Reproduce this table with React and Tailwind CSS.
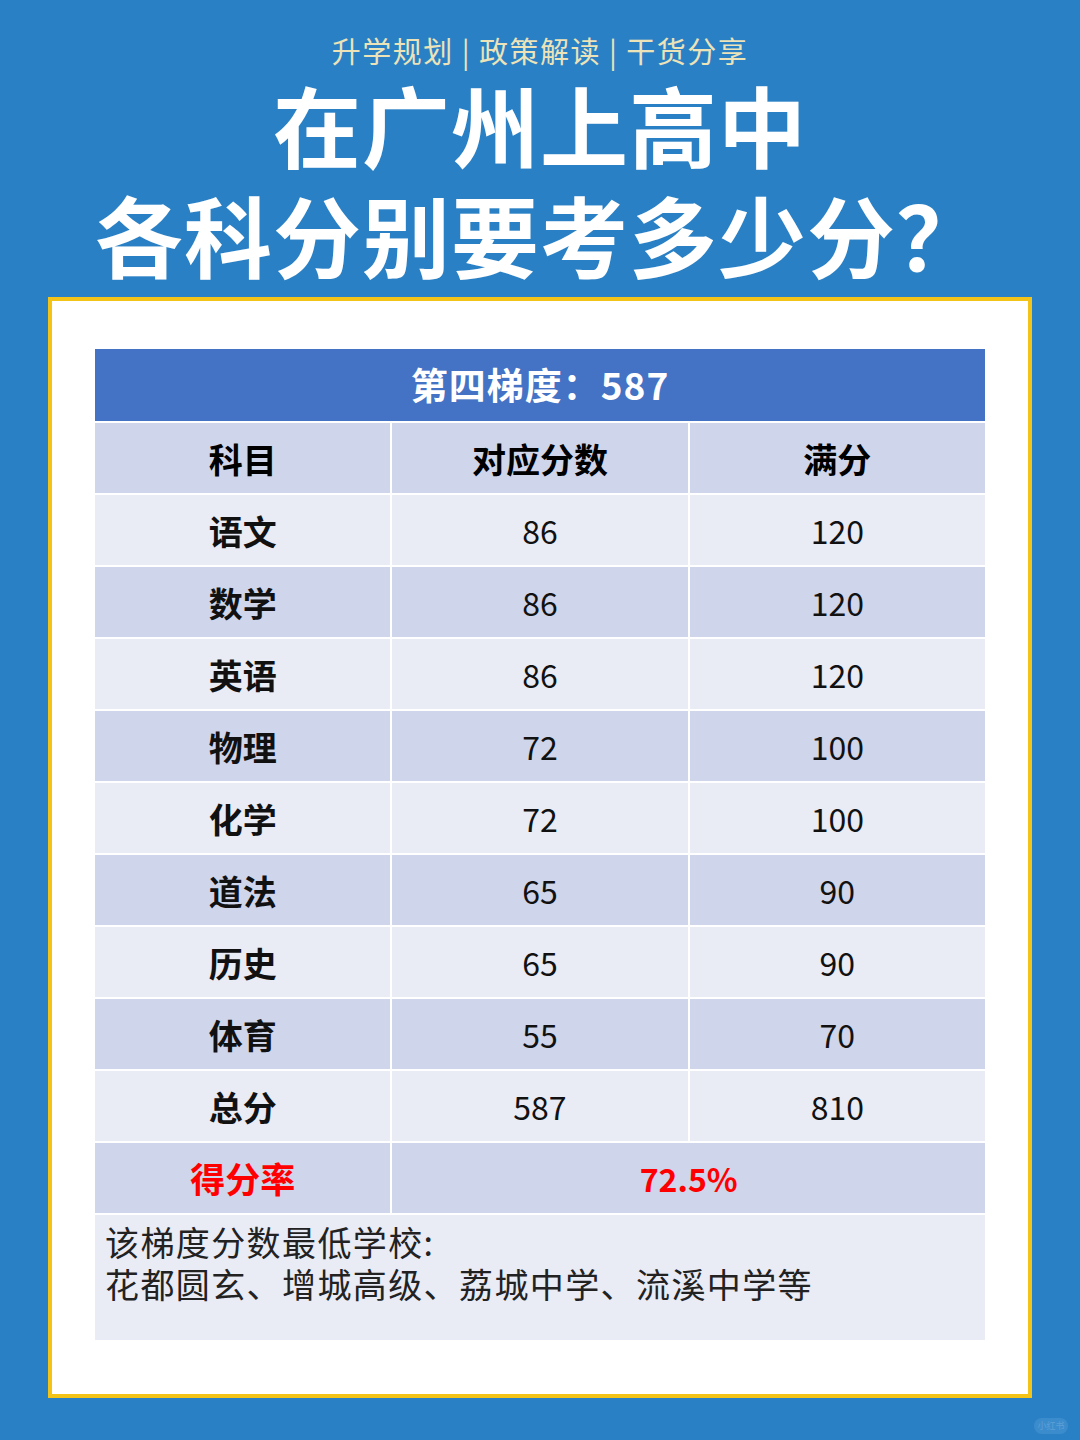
import React from "react";

const rows = [
  ["语文", "86", "120"],
  ["数学", "86", "120"],
  ["英语", "86", "120"],
  ["物理", "72", "100"],
  ["化学", "72", "100"],
  ["道法", "65", "90"],
  ["历史", "65", "90"],
  ["体育", "55", "70"],
  ["总分", "587", "810"],
];

const cjk = { fontFamily: '"Noto Sans CJK SC", "Noto Sans", sans-serif' };

export default function App() {
  return (
    <div className="w-[1080px] h-[1440px] bg-[#2a80c5] flex flex-col items-center relative overflow-hidden" style={cjk}>
      <p className="mt-[30px] text-[29px] leading-[40px] tracking-[1.5px] text-[#ece3b8]">升学规划 | 政策解读 | 干货分享</p>
      <div className="mt-[-2px] text-white font-bold text-center text-[88px] leading-[110px] tracking-[1px]">
        <h1>在广州上高中</h1>
        <h1>各科分别要考多少分？</h1>
      </div>

      <div className="mt-[9px] w-[984px] bg-white border-4 border-[#f3c317] pt-[48px] pb-[54px] px-[43px]">
        <div className="flex flex-col gap-[2px]">
          <div className="h-[72px] bg-[#4472c4] flex items-center justify-center text-white font-bold text-[37px] tracking-[1px]">
            第四梯度：587
          </div>
          <div className="grid grid-cols-3 gap-[2px] h-[70px] text-[34px] font-bold text-black">
            <div className="bg-[#cfd5ea] flex items-center justify-center">科目</div>
            <div className="bg-[#cfd5ea] flex items-center justify-center">对应分数</div>
            <div className="bg-[#cfd5ea] flex items-center justify-center">满分</div>
          </div>
          {rows.map((r, i) => {
            const bg = i % 2 === 0 ? "bg-[#e9ebf5]" : "bg-[#cfd5ea]";
            return (
              <div key={r[0]} className="grid grid-cols-3 gap-[2px] h-[70px] text-[32px] text-[#111]">
                <div className={`${bg} flex items-center justify-center font-bold text-[34px]`}>{r[0]}</div>
                <div className={`${bg} flex items-center justify-center`}>{r[1]}</div>
                <div className={`${bg} flex items-center justify-center`}>{r[2]}</div>
              </div>
            );
          })}
          <div className="grid grid-cols-3 gap-[2px] h-[70px] text-[35px] font-bold text-[#ff0000]">
            <div className="bg-[#cfd5ea] flex items-center justify-center">得分率</div>
            <div className="col-span-2 bg-[#cfd5ea] flex items-center justify-center text-[32px]">72.5%</div>
          </div>
          <div className="h-[125px] bg-[#e9ebf5] px-[10px] pt-[6px] text-[34px] leading-[42px] tracking-[1.4px] text-[#222]">
            <p>该梯度分数最低学校:</p>
            <p>花都圆玄、增城高级、荔城中学、流溪中学等</p>
          </div>
        </div>
      </div>

      <div className="absolute right-[12px] bottom-[6px] w-[34px] h-[16px] rounded-full bg-[#3b8ccd] text-[9px] leading-[16px] text-center text-[#5c9fd6]">
        小红书
      </div>
    </div>
  );
}
